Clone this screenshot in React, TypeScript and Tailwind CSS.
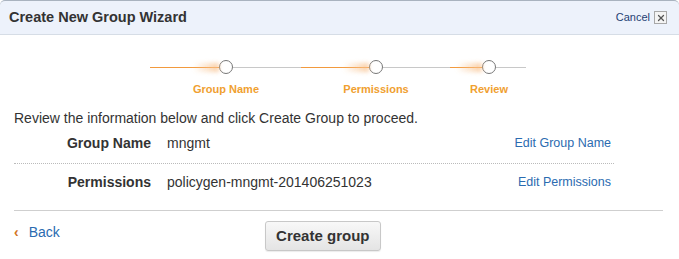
import { X } from 'lucide-react';

const steps = [
  { label: 'Group Name', lead: 69, tail: 68 },
  { label: 'Permissions', lead: 68, tail: 67 },
  { label: 'Review', lead: 32, tail: 30 },
];

function Step({ label, lead, tail }: { label: string; lead: number; tail: number }) {
  return (
    <div className="flex items-start">
      {/* orange lead-in with glow toward the circle */}
      <div className="relative mt-[7px] h-[1px] border-t border-[#f29a3e]" style={{ width: lead }}>
        <div className="absolute right-0 top-[-5px] h-[9px] w-[26px] bg-gradient-to-r from-transparent to-[#f8c28e] opacity-80 blur-[2px]" />
      </div>
      <div className="flex w-[14px] flex-col items-center">
        <div className="h-[14px] w-[14px] rounded-full border-[1.5px] border-[#777] bg-white" />
        <span className="mt-[7px] whitespace-nowrap text-[11px] font-bold text-[#f0a030]">{label}</span>
      </div>
      <div className="mt-[7px] h-px bg-[#c8c8c8]" style={{ width: tail }} />
    </div>
  );
}

export default function App() {
  return (
    <div className="h-[259px] w-[679px] bg-white font-['Liberation_Sans',Arial,sans-serif] text-[#333]">
      {/* Header */}
      <div className="flex h-[35px] items-center justify-between rounded-t-[5px] border-t border-[#a9b3bf] border-b border-b-[#d6dde6] bg-[#edf2fb] pl-[9px] pr-[12px]">
        <h1 className="text-[14.5px] font-bold text-[#333]">Create New Group Wizard</h1>
        <div className="flex items-center gap-[4px]">
          <span className="text-[11px] text-[#1f3f73]">Cancel</span>
          <span className="flex h-[13px] w-[13px] items-center justify-center border border-[#a8a8a8] bg-[#f4f4f4]">
            <X className="h-[10px] w-[10px] text-[#555]" strokeWidth={3} />
          </span>
        </div>
      </div>

      {/* Step indicator */}
      <div className="flex h-[75px] pl-[150px] pt-[25px]">
        {steps.map((s) => (
          <Step key={s.label} {...s} />
        ))}
      </div>

      {/* Review body */}
      <div className="px-[14px]">
        <p className="text-[14px] leading-[16px] text-[#333]">
          Review the information below and click Create Group to proceed.
        </p>
        <div className="w-[600px]">
          <div className="flex h-[38px] items-center border-b border-dotted border-[#bbb] pb-[3px] text-[14px]">
            <span className="w-[137px] text-right font-bold">Group Name</span>
            <span className="ml-[16px] flex-1">mngmt</span>
            <a className="pr-[3px] text-[12.5px] text-[#2b6bb0]">Edit Group Name</a>
          </div>
          <div className="flex h-[37px] items-center text-[14px]">
            <span className="w-[137px] text-right font-bold">Permissions</span>
            <span className="ml-[16px] flex-1">policygen-mngmt-201406251023</span>
            <a className="pr-[3px] text-[12.5px] text-[#2b6bb0]">Edit Permissions</a>
          </div>
        </div>
        <div className="mt-[9px] w-[649px] border-t border-[#cfcfcf]" />

        {/* Footer */}
        <div className="flex items-start pt-[10px]">
          <a className="mt-[3px] flex items-center gap-[10px] text-[14px] leading-[16px] text-[#2b6bb0]">
            <span className="text-[14px] font-bold text-[#d2751f]">‹</span>
            Back
          </a>
          <button className="ml-[205px] h-[30px] w-[116px] rounded-[3px] border border-[#c8c8c8] bg-gradient-to-b from-[#f8f8f8] to-[#e4e4e4] text-[15px] font-bold text-[#333] shadow-[0_1px_1px_rgba(0,0,0,0.08)]">
            Create group
          </button>
        </div>
      </div>
    </div>
  );
}
